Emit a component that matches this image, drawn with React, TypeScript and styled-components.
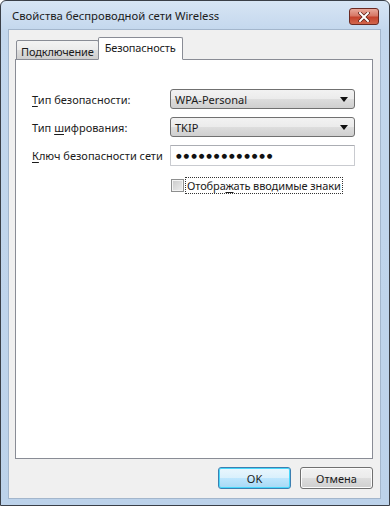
import React from "react";
import styled, { createGlobalStyle } from "styled-components";

const GlobalStyle = createGlobalStyle`
html, body {
margin:0;
padding:0;
background:#ffffff;
}
body {
font-family:"Noto Sans", "Open Sans", sans-serif;
}
`;

const Window = styled.div`
width:390px;
height:506px;
box-sizing:border-box;
display:flex;
flex-direction:column;
border:1px solid #3a3f47;
border-radius:6px 6px 0 0;
background:linear-gradient(to bottom, #d7e5f4 0px, #c3d7ed 30px, #bcd2ea 100%);
overflow:hidden;
`;

const TitleBar = styled.div`
height:28px;
display:flex;
align-items:center;
justify-content:space-between;
padding:0 10px 0 11px;
flex-shrink:0;
`;

const Title = styled.span`
font-size:11.3px;
color:#1b1b1b;
`;

const CloseButton = styled.div`
width:30px;
height:17px;
box-sizing:border-box;
border:1px solid #6b2a22;
border-radius:3px;
background:linear-gradient(to bottom, #e9a99b 0%, #d77866 45%, #c5432d 55%, #d1664c 100%);
display:flex;
align-items:center;
justify-content:center;
margin-top:3px;
`;

const Client = styled.div`
flex:1;
margin:0 8px 6px 7px;
background:#f0f0f0;
border:1px solid #a3b6cc;
display:flex;
flex-direction:column;
padding:7px 7px 9px 6px;
`;

const TabStrip = styled.div`
height:23px;
display:flex;
align-items:flex-end;
padding-left:1px;
position:relative;
z-index:1;
margin-bottom:-1px;
`;

type TabProps = {
$active?: boolean;
};

const Tab = styled.div<TabProps>`
box-sizing:border-box;
height:${p => (p.$active ? "23px" : "20px")};
padding:${p => (p.$active ? "1px 6px 0 6px" : "2px 4px 0 4px")};
border:1px solid #898c95;
border-bottom:${p => (p.$active ? "1px solid #ffffff" : "1px solid #898c95")};
margin-left:${p => (p.$active ? "-1px" : "0")};
background:${p => (p.$active ? "#ffffff" : "linear-gradient(to bottom, #f3f3f3 0%, #ebebeb 50%, #dddddd 51%, #cfcfcf 100%)")};
border-radius:2px 2px 0 0;
font-size:11px;
color:#1b1b1b;
line-height:17px;
letter-spacing:-0.15px;
`;

const Panel = styled.div`
flex:1;
background:#ffffff;
border:1px solid #898c95;
padding:29px 17px 0 16px;
`;

const Form = styled.div`
display:grid;
grid-template-columns:138px 185px;
row-gap:8px;
align-items:center;
`;

const Label = styled.span`
font-size:11px;
color:#1b1b1b;
white-space:nowrap;
`;

const Key = styled.span`
text-decoration:underline;
text-underline-offset:2px;
`;

const Combo = styled.div`
height:20px;
box-sizing:border-box;
border:1px solid #707070;
border-radius:3px;
background:linear-gradient(to bottom, #f2f2f2 0%, #ebebeb 50%, #dddddd 51%, #cfcfcf 100%);
display:flex;
align-items:center;
justify-content:space-between;
padding:0 6px 0 4px;
font-size:11px;
color:#1b1b1b;
`;

const Arrow = styled.span`
width:0;
height:0;
border-left:4px solid transparent;
border-right:4px solid transparent;
border-top:5px solid #111111;
`;

const TextBox = styled.div`
height:21px;
box-sizing:border-box;
border:1px solid #c9cbd0;
border-top-color:#abadb3;
border-radius:1px;
background:#ffffff;
display:flex;
align-items:center;
padding-left:5px;
`;

const Dots = styled.span`
font-family:"DejaVu Sans", sans-serif;
font-size:6.5px;
letter-spacing:1.9px;
color:#111111;
`;

const CheckRow = styled.div`
grid-column:2;
display:flex;
align-items:center;
gap:1px;
margin-top:3px;
margin-left:1px;
white-space:nowrap;
`;

const CheckBox = styled.div`
width:13px;
height:13px;
box-sizing:border-box;
border:1px solid #8e8f8f;
background:linear-gradient(135deg, #c9c9c9 0%, #efefef 100%);
box-shadow:inset 0 0 0 1px #f4f4f4;
`;

const CheckLabel = styled.span`
font-size:11px;
color:#1b1b1b;
padding:0 1px;
border:1px dotted #333333;
line-height:15px;
letter-spacing:-0.1px;
`;

const ButtonRow = styled.div`
display:flex;
justify-content:flex-end;
gap:9px;
margin-top:8px;
`;

type ButtonProps = {
$default?: boolean;
};

const Button = styled.div<ButtonProps>`
width:73px;
height:22px;
box-sizing:border-box;
border:1px solid ${p => (p.$default ? "#3c7fb1" : "#707070")};
border-radius:3px;
background:${p =>
p.$default
? "linear-gradient(to bottom, #eaf6fd 0%, #d9f0fc 50%, #bee6fd 51%, #a7d9f5 100%)"
: "linear-gradient(to bottom, #f2f2f2 0%, #ebebeb 50%, #dddddd 51%, #cfcfcf 100%)"};
box-shadow:${p => (p.$default ? "inset 0 0 0 1px #48d8fb" : "inset 0 0 0 1px #fcfcfc")};
display:flex;
align-items:center;
justify-content:center;
font-size:11px;
color:#1b1b1b;
`;

export default function App() {
return (
<>
<GlobalStyle />
<Window>
<TitleBar>
<Title>Свойства беспроводной сети Wireless</Title>
<CloseButton>
<svg width="12" height="10" viewBox="0 0 12 10">
<path d="M2 1 L10 9 M10 1 L2 9" stroke="#5a1c14" strokeWidth="3.4" strokeLinecap="square" />
<path d="M2 1 L10 9 M10 1 L2 9" stroke="#ffffff" strokeWidth="2" strokeLinecap="square" />
</svg>
</CloseButton>
</TitleBar>
<Client>
<TabStrip>
<Tab>Подключение</Tab>
<Tab $active>Безопасность</Tab>
</TabStrip>
<Panel>
<Form>
<Label><Key>Т</Key>ип безопасности:</Label>
<Combo>WPA-Personal<Arrow /></Combo>
<Label>Тип <Key>ш</Key>ифрования:</Label>
<Combo>TKIP<Arrow /></Combo>
<Label><Key>К</Key>люч безопасности сети</Label>
<TextBox><Dots>●●●●●●●●●●●●●</Dots></TextBox>
<CheckRow>
<CheckBox />
<CheckLabel>Отобра<Key>ж</Key>ать вводимые знаки</CheckLabel>
</CheckRow>
</Form>
</Panel>
<ButtonRow>
<Button $default>OK</Button>
<Button>Отмена</Button>
</ButtonRow>
</Client>
</Window>
</>
);
}
